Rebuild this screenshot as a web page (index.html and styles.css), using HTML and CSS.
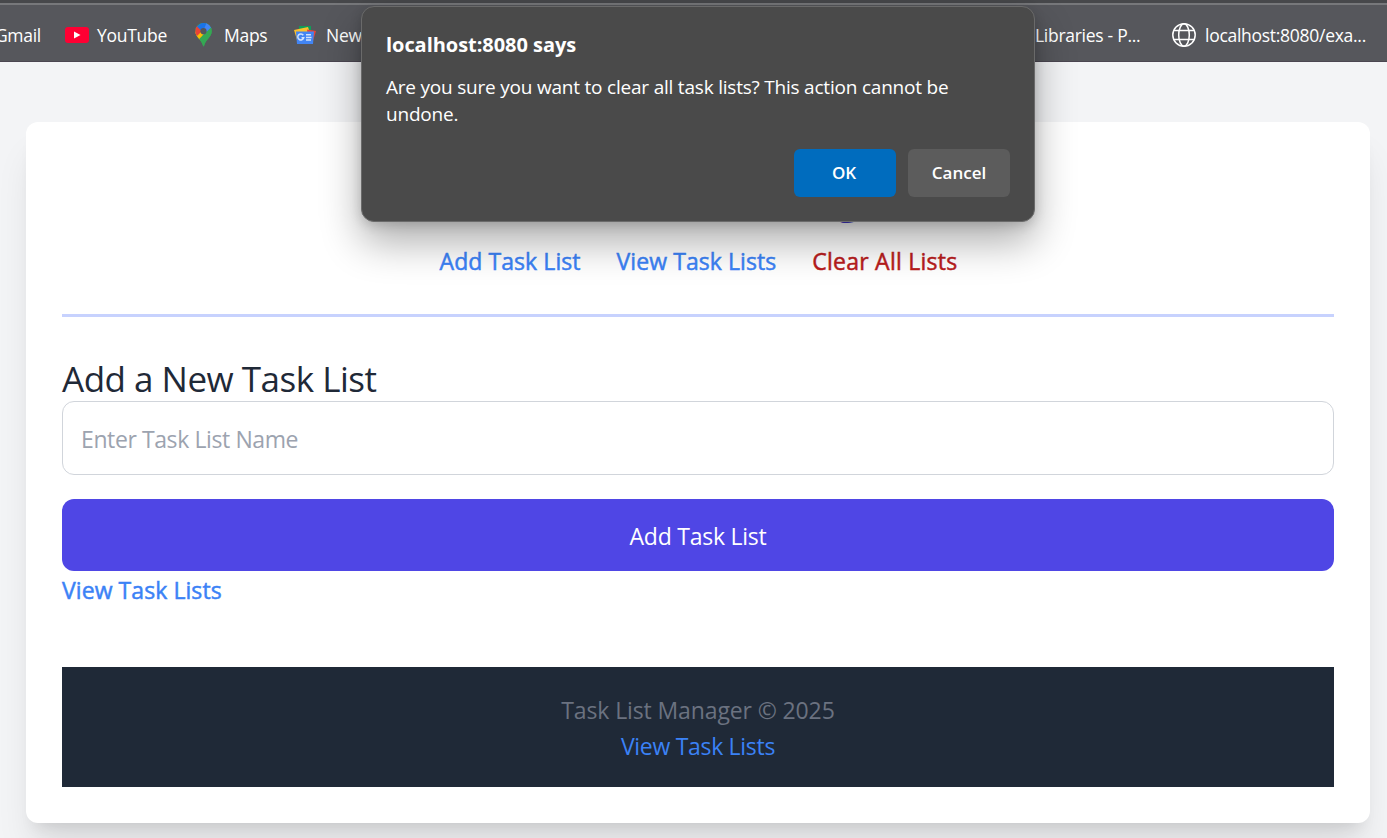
FILE: index.html
```html
<!DOCTYPE html>
<html lang="en">
<head>
<meta charset="utf-8">
<title>Task List Manager</title>
<link rel="stylesheet" href="styles.css">
</head>
<body>
<div class="bookmarks">
  <div class="bookmark-group">
    <span class="bookmark gmail">Gmail</span>
    <span class="bookmark youtube"><svg width="24" height="16" viewBox="0 0 24 16"><rect width="24" height="16" rx="3" fill="#ff0033"/><path d="M9 4.5v7l6.5-3.5z" fill="#fff"/></svg><span>YouTube</span></span>
    <span class="bookmark maps"><svg width="17" height="24" viewBox="0 0 17 24"><defs><clipPath id="pin"><path d="M8.5 0A8 8 0 0 0 .3 8.2c0 3.3 1.6 5.1 3.6 7.5C6 18.200 7.300 20.400 7.900 22.700c.2 1 1 1 1.200 0 .6-2.400 1.900-4.600 4-7 2-2.400 3.600-4.200 3.600-7.500A8 8 0 0 0 8.500 0z"/></clipPath></defs><g clip-path="url(#pin)"><rect width="17" height="24" fill="#34a853"/><path d="M0 9l6-3 8-1-10 12-4-2z" fill="#fbbc04"/><path d="M0 2l3 1 5 4-6 6-2-2z" fill="#ea4335"/><path d="M2 3.500L6 0h6v3L6.500 8z" fill="#1a73e8"/><path d="M11.500 0H17v5L9.500 13l-2-3z" fill="#4285f4"/><path d="M16 4.500h2v8L9 24l-4.800-8z" fill="#34a853"/></g><circle cx="8.500" cy="8.200" r="3.100" fill="#55565b"/></svg><span>Maps</span></span>
    <span class="bookmark news"><svg width="22" height="19" viewBox="0 0 22 19"><path d="M5 0h12v6H5z" fill="#0f9d58"/><path d="M0 4l14-3 2 6L3 14z" fill="#fbc02d"/><path d="M13 3.500l9 1.500-3 10-5-2z" fill="#ea4335"/><path d="M2 5.500h18l-1 12.500H3z" fill="#4285f4"/><path d="M9.300 9.200a3 3 0 1 0 .4 2.600H7.500M12 8.800h5M12 11.500h5.500M12 14h5" fill="none" stroke="#d2e3fc" stroke-width="1.500"/></svg><span>News</span></span>
  </div>
  <div class="bookmark-group">
    <span class="bookmark libraries">Libraries - P...</span>
    <span class="bookmark local"><svg width="24" height="24" viewBox="0 0 24 24" fill="none" stroke="#fff" stroke-width="1.500"><circle cx="12" cy="12" r="11.200"/><ellipse cx="12" cy="12" rx="5.300" ry="11.200"/><path d="M2 7.600h20M2 16.400h20"/></svg><span>localhost:8080/exa...</span></span>
  </div>
</div>

<main class="card">
  <header class="header">
    <h1 class="title">Task List Manager</h1>
    <nav class="nav">
      <a class="link">Add Task List</a>
      <a class="link">View Task Lists</a>
      <a class="link danger">Clear All Lists</a>
    </nav>
  </header>
  <h2 class="heading">Add a New Task List</h2>
  <form class="form">
    <input class="field" type="text" placeholder="Enter Task List Name">
    <button class="submit" type="button">Add Task List</button>
  </form>
  <a class="link below">View Task Lists</a>
  <footer class="footer">
    <p class="copyright">Task List Manager © 2025</p>
    <a class="footer-link">View Task Lists</a>
  </footer>
</main>

<div class="dialog" role="alertdialog">
  <div class="dialog-title">localhost:8080 says</div>
  <p class="dialog-text">Are you sure you want to clear all task lists? This action cannot be<br>undone.</p>
  <div class="dialog-actions">
    <button class="dialog-button ok" type="button">OK</button>
    <button class="dialog-button" type="button">Cancel</button>
  </div>
</div>
</body>
</html>
```

FILE: styles.css
```css
* { box-sizing: border-box; }

body {
  margin: 0;
  height: 838px;
  overflow: hidden;
  background: #f3f4f6;
  font-family: "Open Sans", "Noto Sans", sans-serif;
  font-size: 23px;
  line-height: 36px;
  color: #1f2937;
}

h1, h2, p { margin: 0; font-weight: 400; }

button, input { font: inherit; letter-spacing: inherit; }

.bookmarks {
  display: flex;
  justify-content: space-between;
  height: 62px;
  padding: 3px 21px 0 0;
  border-top: 3px solid #47484b;
  border-bottom: 1px solid #4b4651;
  background: #56575c;
  box-shadow: inset 0 2px #77787b;
  color: #fff;
  font-size: 17.5px;
  letter-spacing: -.28px;
  line-height: 54px;
  white-space: nowrap;
}

.bookmark-group { display: flex; }
.bookmark { display: flex; align-items: center; height: 58px; }
.bookmark svg { flex: none; }
.bookmark span { padding-bottom: 1px; }
.gmail { width: 41px; justify-content: flex-end; }
.youtube { gap: 8px; margin-left: 24px; width: 130px; }
.maps { gap: 12px; width: 99px; }
.news { gap: 10px; }
.libraries { width: 137px; }
.local { gap: 9px; width: 194px; }

.card {
  width: 1344px;
  height: 701px;
  margin: 60px 0 0 26px;
  padding: 36px;
  border-radius: 12px;
  background: #fff;
  box-shadow: 0 30px 37px -7px rgba(0, 0, 0, .1), 0 12px 15px -9px rgba(0, 0, 0, .1);
}

.header {
  border-bottom: 3px solid #c7d2fe;
  padding-bottom: 35px;
  margin-bottom: 36px;
}

.title {
  padding-top: 7px;
  margin-bottom: 18px;
  color: #4338ca;
  font-size: 45px;
  font-weight: 700;
  letter-spacing: 1.3px;
  line-height: 60px;
  text-align: center;
}

.nav { display: flex; justify-content: center; gap: 36px; padding-left: 1px; }

.link {
  color: #3b82f6;
  letter-spacing: .07px;
  -webkit-text-stroke: .5px;
}

.danger { color: #b91c1c; letter-spacing: .25px; }

.heading {
  padding-top: 3px;
  font-size: 35px;
  line-height: 45px;
  letter-spacing: -.5px;
}

.form { display: grid; gap: 24px; }

.field {
  width: 100%;
  height: 74px;
  padding: 1px 18px 0;
  border: 1px solid #d1d5db;
  border-radius: 12px;
  background: #fff;
  letter-spacing: -.4px;
}

.field::placeholder { color: #9ca3af; opacity: 1; }

.submit {
  height: 72px;
  padding: 2px 0 0;
  border: 0;
  border-radius: 12px;
  background: #4f46e5;
  color: #fff;
  letter-spacing: -.25px;
}

.below { display: block; padding-top: 1px; }

.footer {
  height: 120px;
  margin-top: 59px;
  padding: 25px 24px 23px;
  background: #1f2937;
  text-align: center;
}

.copyright { color: #6b7280; letter-spacing: -.12px; }
.footer-link { display: block; color: #3b82f6; letter-spacing: -.3px; }

.dialog {
  position: absolute;
  left: 361px;
  top: 6px;
  width: 674px;
  height: 216px;
  padding: 24px;
  border: 1px solid #6a6a6a;
  border-radius: 13px;
  background: #4a4a4a;
  box-shadow: 0 20px 40px rgba(0, 0, 0, .32), 0 3px 12px rgba(0, 0, 0, .16);
  color: #fff;
}

.dialog-title { font-size: 20px; font-weight: 700; line-height: 28px; letter-spacing: -.05px; }
.dialog-text { margin-top: 15px; font-size: 19px; line-height: 27px; letter-spacing: -.21px; }

.dialog-actions {
  display: flex;
  justify-content: flex-end;
  gap: 12px;
  margin-top: 21px;
}

.dialog-button {
  width: 102px;
  height: 48px;
  padding: 0;
  border: 0;
  border-radius: 6px;
  background: #5c5c5c;
  color: #fff;
  font-size: 17px;
  font-weight: 600;
}

.ok { padding-right: 2px; background: #006cbe; }
```
